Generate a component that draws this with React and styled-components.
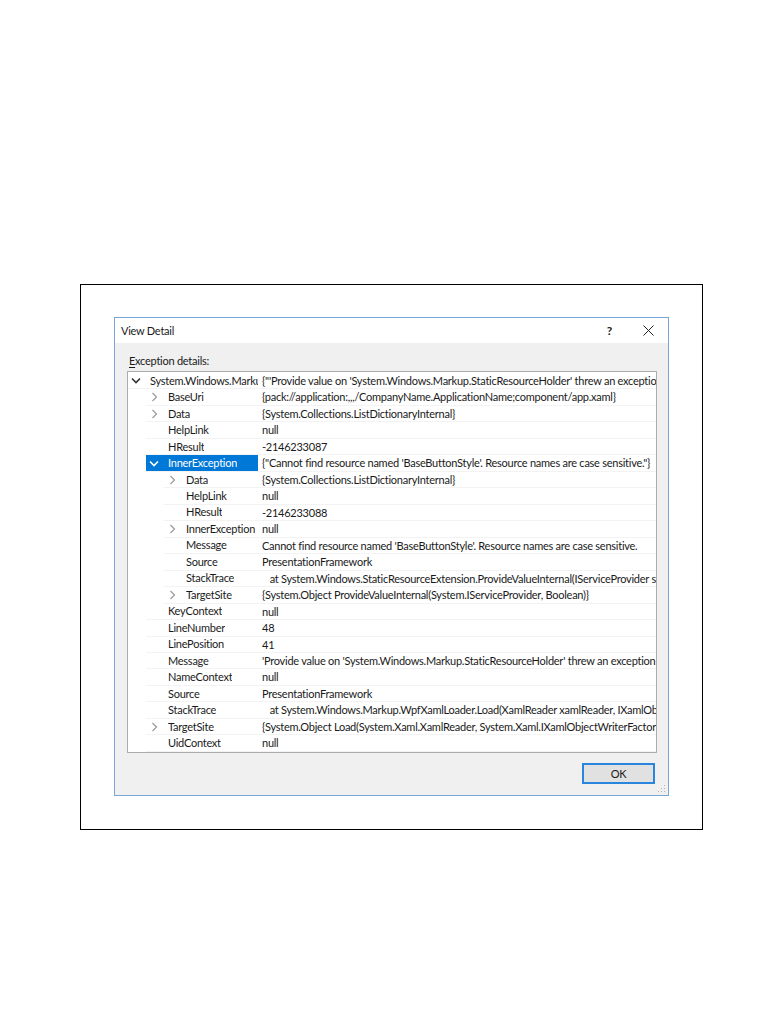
import React from 'react'
import styled, { createGlobalStyle } from 'styled-components'

const GlobalStyle = createGlobalStyle`
  body {
    margin: 0;
    background: #ffffff;
    font-family: Lato, "Noto Sans", sans-serif;
    letter-spacing: -0.25px;
    color: #1a1a1a;
  }
`

const Page = styled.div`
  padding: 284px 0 0 80px;
`

const Frame = styled.div`
  width: 623px;
  height: 546px;
  box-sizing: border-box;
  border: 1px solid #000;
  display: flex;
  justify-content: center;
  align-items: flex-start;
  padding-top: 32px;
`

const Dialog = styled.div`
  position: relative;
  width: 555px;
  height: 479px;
  box-sizing: border-box;
  border: 1px solid #79a6d8;
  background: #f0f0f0;
  display: flex;
  flex-direction: column;
`

const TitleBar = styled.div`
  height: 25px;
  background: #fff;
  display: flex;
  align-items: center;
  padding-left: 6px;
  font-size: 11px;
`

const Title = styled.div`
  flex: 1;
`

const CaptionButton = styled.div`
  width: 39px;
  height: 25px;
  display: flex;
  align-items: center;
  justify-content: center;
  font-size: 12px;
  font-weight: 700;
  color: #222;
`

const Body = styled.div`
  flex: 1;
  display: flex;
  flex-direction: column;
  padding: 0 11px 0 12px;
`

const Label = styled.div`
  margin-top: 10px;
  height: 18px;
  padding-left: 2px;
  font-size: 11px;
  line-height: 16px;

  u {
    text-decoration: underline;
    text-underline-offset: 2px;
  }
`

const Tree = styled.div`
  height: 382px;
  box-sizing: border-box;
  border: 1px solid #acacac;
  background: #fff;
  padding-top: 1px;
  overflow: hidden;
`

const Row = styled.div`
  display: grid;
  grid-template-columns: 130px 1fr;
  height: 16.48px;
  font-size: 11px;
  line-height: 16px;
  white-space: pre;
`

const NameCell = styled.div`
  margin-left: ${p => p.level * 18}px;
  display: flex;
  align-items: center;
  overflow: hidden;
  border-bottom: 1px solid #f3f3f3;
  box-sizing: border-box;
  background: ${p => (p.selected ? '#0078d7' : 'transparent')};
  color: ${p => (p.selected ? '#fff' : 'inherit')};
`

const Expander = styled.span`
  flex: none;
  width: 16px;
  display: flex;
  align-items: center;
  justify-content: center;
`

const Name = styled.span`
  margin-left: 6px;
  overflow: hidden;
`

const ValueCell = styled.div`
  padding-left: 4px;
  overflow: hidden;
  border-bottom: 1px solid #f3f3f3;
  box-sizing: border-box;
`

const Footer = styled.div`
  display: flex;
  justify-content: flex-end;
  padding: 10px 2px 0 0;
`

const OkButton = styled.button`
  width: 73px;
  height: 21px;
  box-sizing: border-box;
  border: 2px solid #2a86dc;
  background: #e1e1e1;
  font-family: inherit;
  font-size: 11px;
  letter-spacing: inherit;
  color: #1a1a1a;
  padding: 0;
`

const Grip = styled.svg`
  position: absolute;
  right: 2px;
  bottom: 2px;
`

const Chevron = ({ open, selected }) =>
  open ? (
    <svg width="10" height="7" viewBox="0 0 10 7">
      <path d="M1 1.5 L5 5.5 L9 1.5" fill="none" stroke={selected ? '#fff' : '#333'} strokeWidth="1.6" />
    </svg>
  ) : (
    <svg width="7" height="10" viewBox="0 0 7 10">
      <path d="M1.5 1 L5.5 5 L1.5 9" fill="none" stroke="#9a9a9a" strokeWidth="1.2" />
    </svg>
  )

const rows = [
  [0, 'System.Windows.Markup.XamlParseException', `{"'Provide value on 'System.Windows.Markup.StaticResourceHolder' threw an exception.' Line number '48' and line position '41'."}`, 'open'],
  [1, 'BaseUri', '{pack://application:,,,/CompanyName.ApplicationName;component/app.xaml}', 'closed'],
  [1, 'Data', '{System.Collections.ListDictionaryInternal}', 'closed'],
  [1, 'HelpLink', 'null'],
  [1, 'HResult', '-2146233087'],
  [1, 'InnerException', `{"Cannot find resource named 'BaseButtonStyle'. Resource names are case sensitive."}`, 'open', true],
  [2, 'Data', '{System.Collections.ListDictionaryInternal}', 'closed'],
  [2, 'HelpLink', 'null'],
  [2, 'HResult', '-2146233088'],
  [2, 'InnerException', 'null', 'closed'],
  [2, 'Message', "Cannot find resource named 'BaseButtonStyle'. Resource names are case sensitive."],
  [2, 'Source', 'PresentationFramework'],
  [2, 'StackTrace', '   at System.Windows.StaticResourceExtension.ProvideValueInternal(IServiceProvider serviceProvider, Boolean allowDeferredReference)'],
  [2, 'TargetSite', '{System.Object ProvideValueInternal(System.IServiceProvider, Boolean)}', 'closed'],
  [1, 'KeyContext', 'null'],
  [1, 'LineNumber', '48'],
  [1, 'LinePosition', '41'],
  [1, 'Message', "'Provide value on 'System.Windows.Markup.StaticResourceHolder' threw an exception.' Line number '48'"],
  [1, 'NameContext', 'null'],
  [1, 'Source', 'PresentationFramework'],
  [1, 'StackTrace', '   at System.Windows.Markup.WpfXamlLoader.Load(XamlReader xamlReader, IXamlObjectWriterFactory writerFactory)'],
  [1, 'TargetSite', '{System.Object Load(System.Xaml.XamlReader, System.Xaml.IXamlObjectWriterFactory, Boolean)}', 'closed'],
  [1, 'UidContext', 'null'],
]

const App = () => {
  return (
    <Page>
      <GlobalStyle />
      <Frame>
        <Dialog>
          <TitleBar>
            <Title>View Detail</Title>
            <CaptionButton>?</CaptionButton>
            <CaptionButton>
              <svg width="11" height="11" viewBox="0 0 11 11">
                <path d="M0.5 0.5 L10.5 10.5 M10.5 0.5 L0.5 10.5" stroke="#222" strokeWidth="1" />
              </svg>
            </CaptionButton>
          </TitleBar>
          <Body>
            <Label><u>E</u>xception details:</Label>
            <Tree>
              {rows.map(([level, name, value, exp, selected], i) => (
                <Row key={i}>
                  <NameCell level={level} selected={selected}>
                    <Expander>{exp && <Chevron open={exp === 'open'} selected={selected} />}</Expander>
                    <Name>{name}</Name>
                  </NameCell>
                  <ValueCell>{value}</ValueCell>
                </Row>
              ))}
            </Tree>
            <Footer>
              <OkButton>OK</OkButton>
            </Footer>
          </Body>
          <Grip width="8" height="8" viewBox="0 0 8 8">
            <rect x="6" y="0" width="1" height="1" fill="#b5b5b5" />
            <rect x="3" y="3" width="1" height="1" fill="#b5b5b5" />
            <rect x="6" y="3" width="1" height="1" fill="#b5b5b5" />
            <rect x="0" y="6" width="1" height="1" fill="#b5b5b5" />
            <rect x="3" y="6" width="1" height="1" fill="#b5b5b5" />
            <rect x="6" y="6" width="1" height="1" fill="#b5b5b5" />
          </Grip>
        </Dialog>
      </Frame>
    </Page>
  )
}

export default App
